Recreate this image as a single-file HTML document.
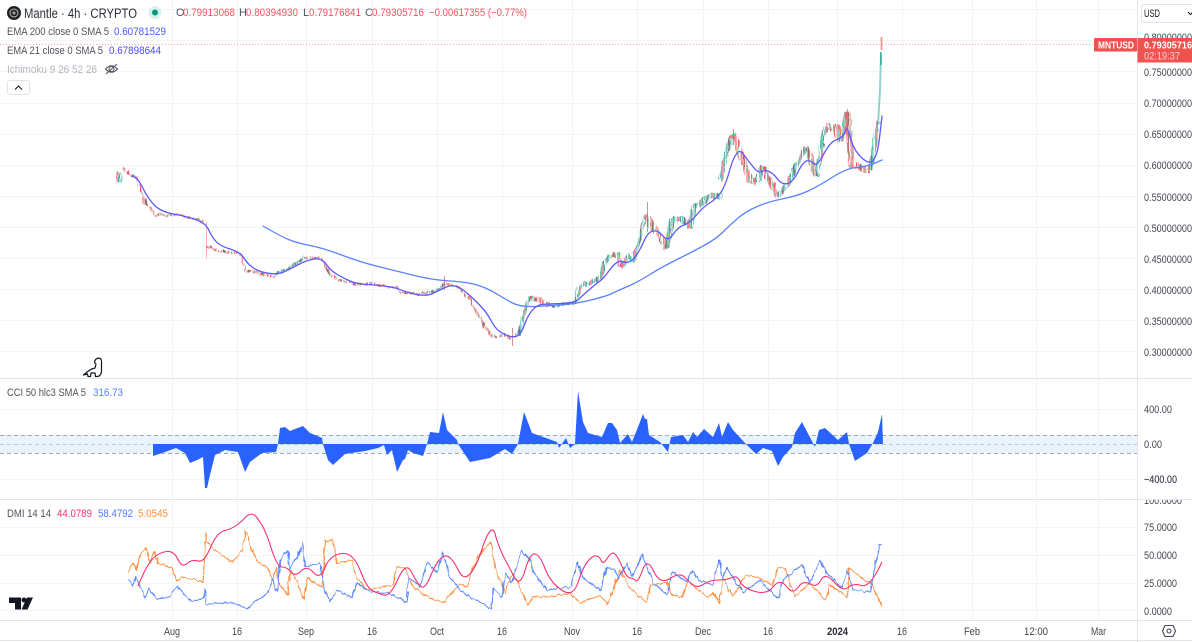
<!DOCTYPE html>
<html><head><meta charset="utf-8">
<style>
html,body{margin:0;padding:0;background:#fff;width:1192px;height:642px;overflow:hidden}
svg{display:block;font-family:"Liberation Sans",sans-serif;filter:blur(.3px)}
text{font-size:11px}
.g{fill:#50535e}.r{fill:#f7525f}.a{fill:#434651;font-size:11px}
.ln{fill:none;stroke-width:1.1;stroke-linejoin:round}
.ema{fill:none;stroke-width:1.3;stroke-linejoin:round;stroke-linecap:round}
.c{fill:none;stroke-linejoin:round;stroke-linecap:butt}
</style></head><body>
<svg width="1192" height="642" viewBox="0 0 1192 642" xmlns="http://www.w3.org/2000/svg">
<defs>
<pattern id="pg" patternUnits="userSpaceOnUse" width="11" height="40">
<rect x="0" width="1" height="40" fill="#26a69a" fill-opacity=".75"/><rect x="1" width="1" height="40" fill="#26a69a" fill-opacity=".5"/><rect x="2" width="1" height="40" fill="#6b5a5a"/><rect x="3" width="1" height="40" fill="#26a69a" fill-opacity=".85"/><rect x="4" width="1" height="40" fill="#26a69a" fill-opacity=".45"/><rect x="6" width="1" height="40" fill="#26a69a" fill-opacity=".8"/><rect x="7" width="1" height="40" fill="#ef5350" fill-opacity=".8"/><rect x="8" width="1" height="40" fill="#26a69a" fill-opacity=".6"/><rect x="9" width="1" height="40" fill="#3f8f88"/>
</pattern>
<pattern id="pr" patternUnits="userSpaceOnUse" width="13" height="40">
<rect x="0" width="1" height="40" fill="#ef5350" fill-opacity=".85"/><rect x="1" width="1" height="40" fill="#ef5350" fill-opacity=".55"/><rect x="2" width="1" height="40" fill="#6b5a5a"/><rect x="3" width="1" height="40" fill="#ef5350" fill-opacity=".9"/><rect x="5" width="1" height="40" fill="#ef5350" fill-opacity=".6"/><rect x="6" width="1" height="40" fill="#26a69a" fill-opacity=".6"/><rect x="7" width="1" height="40" fill="#ef5350" fill-opacity=".9"/><rect x="8" width="1" height="40" fill="#ef5350" fill-opacity=".5"/><rect x="10" width="1" height="40" fill="#e0444a"/><rect x="11" width="1" height="40" fill="#26a69a" fill-opacity=".5"/>
</pattern>
<filter id="j" filterUnits="userSpaceOnUse" x="0" y="0" width="1192" height="642" color-interpolation-filters="sRGB">
<feTurbulence type="fractalNoise" baseFrequency="0.22 0.08" numOctaves="2" seed="4" result="n"/>
<feDisplacementMap in="SourceGraphic" in2="n" scale="5" xChannelSelector="R" yChannelSelector="G"/>
</filter>
<filter id="k" filterUnits="userSpaceOnUse" x="0" y="0" width="1192" height="642" color-interpolation-filters="sRGB">
<feTurbulence type="fractalNoise" baseFrequency="0.3 0.1" numOctaves="2" seed="9" result="n"/>
<feDisplacementMap in="SourceGraphic" in2="n" scale="4" xChannelSelector="R" yChannelSelector="G"/>
</filter>
</defs>
<g stroke="#f3f4f6" stroke-width="1" fill="none" shape-rendering="crispEdges">
<path d="M172.500 0V620M237.500 0V620M306.500 0V620M372.500 0V620M437.500 0V620M502.500 0V620M572.500 0V620M637.500 0V620M703.500 0V620M768.500 0V620M837.500 0V620M902.500 0V620M972.500 0V620M1036.500 0V620M1098.500 0V620"/>
<path d="M0 9.500H1137M0 40.500H1137M0 71.500H1137M0 103.500H1137M0 134.500H1137M0 165.500H1137M0 196.500H1137M0 227.500H1137M0 258.500H1137M0 289.500H1137M0 320.500H1137M0 351.500H1137M0 409.500H1137M0 479.500H1137M0 527.500H1137M0 555.500H1137M0 583.500H1137M0 610.500H1137"/>
</g>
<rect x="0" y="435" width="1137" height="18" fill="#e8f4fd"/>
<g stroke="#a3a6af" stroke-width="1" stroke-dasharray="4 3" fill="none" shape-rendering="crispEdges">
<path d="M0 435.500H1137M0 453.500H1137"/><path d="M0 444.500H1137" stroke="#c5c7ce"/>
</g>
<g stroke="#e4e5ea" stroke-width="1" fill="none" shape-rendering="crispEdges">
<path d="M0 378.500H1137M0 499.500H1137M1137.500 0V642M0 620.500H1192M0 640.500H1192"/>
<path d="M1137 378.500H1192"/>
</g>
<path d="M0 44.500H1094" stroke="#f7a5a5" stroke-width="1" stroke-dasharray="1 2" fill="none" shape-rendering="crispEdges"/>

<!-- candles -->
<g filter="url(#j)" opacity=".85">
<polyline class="c" stroke="url(#pg)" stroke-width="5" points="119,172 120,182"/>
<polyline class="c" stroke="url(#pr)" stroke-width="2.500" points="122,168 131,176 138,178 141,190 146,205 150,208 155,214 165,215 180,215 205,222"/>
<polyline class="c" stroke="url(#pr)" stroke-width="2.500" points="206,246 215,250 240,254 245,270 275,277"/>
<polyline class="c" stroke="url(#pg)" stroke-width="3" points="275,275 278,272 290,268 300,260 304,256"/>
<polyline class="c" stroke="url(#pr)" stroke-width="2.500" points="304,258 322,258 330,275 340,280 355,284 372,284 397,288 400,292 425,294"/>
<polyline class="c" stroke="url(#pg)" stroke-width="2.500" points="425,294 440,289 444,283"/>
<polyline class="c" stroke="url(#pr)" stroke-width="2.500" points="444,283 460,288 470,300 490,335 492,337"/>
<polyline class="c" stroke="url(#pr)" stroke-width="3" points="492,337 505,335 511,340"/>
<polyline class="c" stroke="url(#pg)" stroke-width="3.500" points="515,336 520,332 525,310 530,297"/>
<polyline class="c" stroke="url(#pr)" stroke-width="5" points="530,299 540,300 550,306"/>
<polyline class="c" stroke="url(#pg)" stroke-width="3" points="550,306 575,303"/>
<polyline class="c" stroke="url(#pg)" stroke-width="4.500" points="575,303 579,287 600,278 604,264 612,254"/>
<polyline class="c" stroke="url(#pr)" stroke-width="5" points="612,254 618,255 621,268"/>
<polyline class="c" stroke="url(#pg)" stroke-width="4.500" points="621,268 628,255 633,260 640,240 645,215"/>
<polyline class="c" stroke="url(#pr)" stroke-width="7" points="645,215 653,228 660,236 667,248"/>
<polyline class="c" stroke="url(#pg)" stroke-width="6" points="667,248 672,220 683,219 690,226 694,208 710,196 722,196"/>
<polyline class="c" stroke="url(#pg)" stroke-width="5" points="720,180 728,146 733,134"/>
<polyline class="c" stroke="url(#pr)" stroke-width="7" points="733,134 738,147 750,180 757,182"/>
<polyline class="c" stroke="url(#pg)" stroke-width="5" points="757,182 763,166"/>
<polyline class="c" stroke="url(#pr)" stroke-width="6" points="763,166 767,177 778,196"/>
<polyline class="c" stroke="url(#pg)" stroke-width="5" points="778,196 788,184 797,165 805,147"/>
<polyline class="c" stroke="url(#pr)" stroke-width="6" points="805,147 810,158 817,177"/>
<polyline class="c" stroke="url(#pg)" stroke-width="5" points="817,177 822,140 826,127"/>
<polyline class="c" stroke="url(#pr)" stroke-width="8" points="826,127 837,128 841,142"/>
<polyline class="c" stroke="url(#pg)" stroke-width="4.500" points="841,142 847,112"/>
<polyline class="c" stroke="url(#pr)" stroke-width="7" points="847,112 850,147 852,165 870,170"/>
<polyline class="c" stroke="url(#pg)" stroke-width="5" points="870,170 873,153 878,120"/>
</g>
<path d="M206.500 222V258" stroke="#ef5350" stroke-opacity=".45" fill="none"/>
<path d="M444.500 276V290M512.500 328V346M647.500 202V232M733.500 129V145M847.500 109V130" stroke="#c0625f" stroke-opacity=".7" fill="none"/>
<path d="M878 125L880 90L881 55" stroke="#26a69a" stroke-opacity=".5" stroke-width="2" fill="none"/>
<path d="M880.800 65V52" stroke="#26a69a" stroke-opacity=".9" stroke-width="1.500" fill="none"/>
<path d="M881.500 37V50" stroke="#ef5350" stroke-opacity=".6" stroke-width="1.800" fill="none"/>

<path class="ema" stroke="#5b82ff" d="M263 226Q280 236 288.500 239.500Q297 243 310 245.500Q323 248 341.500 255Q360 262 380 267Q400 272 416.500 276Q433 280 450 281Q467 282 477 285Q487 288 496 293.500Q505 299 512.500 303Q520 307 535 306.500L560 305Q575 304 591 300Q607 296 612 293.500Q617 291 627.500 286.500Q638 282 649 275Q660 268 679 258.500Q698 249 707.500 243.500Q717 238 723.500 231.500Q730 225 737.500 218.500Q745 212 756 207Q767 202 782 199Q797 196 807 191.500Q817 187 832 177.500Q847 168 857 167.500Q867 167 882 160"/>
<path class="ema" stroke="#5a5aff" d="M132 176Q138 178 141.500 185.500Q145 193 150 200Q155 207 161 210Q167 213 173.500 214Q180 215 192.500 218.500Q205 222 208.500 229.500Q212 237 216 241.500Q220 246 230 249Q240 252 243.500 257.500Q247 263 252 267Q257 271 267 273Q277 275 283.500 272Q290 269 298.500 264.500Q307 260 314.500 259Q322 258 326 264Q330 270 336.500 274Q343 278 350 281Q357 284 367 284.500Q377 285 387 286.500Q397 288 398.500 289Q400 290 412.500 293.500Q425 297 432.500 293.500Q440 290 445 287.500Q450 285 455 286Q460 287 467.500 293.500Q475 300 481 306.500Q487 313 491 320.500Q495 328 499 331Q503 334 509 336Q515 338 518.500 335Q522 332 525 323.500Q528 315 532.500 310Q537 305 542 304.500Q547 304 561 303.500Q575 303 579 299Q583 295 590 289Q597 283 600 281Q603 279 610 269.500Q617 260 622 261.500Q627 263 630 261.500Q633 260 636.500 255Q640 250 644 241Q648 232 653 231Q658 230 663 236Q668 242 673 234.500Q678 227 684 225Q690 223 696.500 215Q703 207 709 203.500Q715 200 720 193.500Q725 187 729 172.500Q733 158 736.500 154Q740 148 745 156.500Q750 163 754 168Q758 173 761.500 171.500Q765 170 769 171.500Q773 173 777.500 179Q782 185 787.500 183.500Q793 182 798 172Q803 162 806.500 161Q810 160 813.500 163.500Q817 167 823.500 154.500Q830 142 836 140Q842 138 844.500 133.500Q847 122 851 140.500Q855 152 862.500 158.500Q870 165 873.500 160Q877 155 878.500 145Q880 135 882 116"/>

<path fill="#2962ff" d="M153 444L153 456 165 452 176 448 185 453 190 463 197 460 203 457 205 488 207 488 210 475 215 455 225 450 238 452 245 472 250 462 262 453 276 452 278 444 280 428 285 427 290 431 295 429 303 426 310 433 322 438 323 444 328 460 333 465 345 454 365 451 378 448 384 445 387 455 392 450 397 472 403 460 405 459 408 450 413 453 423 456 427 444 430 432 439 433 443 412 447 430 457 440 458 444 470 462 490 458 505 449 512 454 518 444 524 412 532 433 557 442 559 448 566 438 570 448 575 444 578 391 583 422 588 433 602 437 608 423 612 423 617 430 620 443 628 434 632 442 638 427 643 414 645 419 647 419 649 435 660 442 668 452 671 437 683 435 688 442 693 432 697 437 704 429 713 437 719 423 722 437 728 422 733 430 745 443 756 454 763 448 772 451 778 466 783 457 792 447 795 433 802 422 815 447 819 430 825 428 838 440 847 432 849 444 855 461 867 453 873 443 878 432 882 414 883 444Z"/>
<g filter="url(#k)">
<polyline class="ln" stroke="#ff8f3c" points="128,573 133,563 136,570 140,555 146,548 150,563 154,552 158,563 172,568 177,582 182,577 197,580 203,582 206,532 207,542 217,552 232,562 243,550 245,530 253,552 258,563 268,568 273,580 277,567 278,582 288,595 290,570 295,578 304,599 308,578 322,588 325,540 328,543 332,538 337,563 352,560 357,578 367,590 393,585 397,567 405,568 413,587 430,598 443,603 450,595 460,583 467,587 473,567 483,550 491,542 495,567 505,593 513,573 528,605 533,597 550,597 570,593 580,603 600,595 608,605 620,570 630,588 647,603 650,585 667,582 672,595 682,598 688,582 707,597 713,592 719,603 723,578 733,597 745,575 757,577 772,585 778,567 785,568 795,597 810,583 825,600 830,585 847,597 849,568 858,575 867,582 872,583 882,606"/>
<polyline class="ln" stroke="#5b86ff" points="128,579 133,587 136,577 145,597 148,588 157,599 170,597 177,586 192,602 203,598 205,589 206,604 230,602 248,609 257,600 268,593 272,578 277,592 280,560 288,550 290,570 297,557 303,543 305,567 320,563 325,590 330,602 337,590 352,597 357,583 370,592 390,593 407,602 408,577 420,587 427,563 437,572 443,552 450,577 460,590 470,597 492,609 493,588 502,597 505,572 512,583 521,550 530,560 533,572 547,590 570,587 578,562 582,577 600,590 607,567 615,570 618,580 627,562 632,577 642,555 653,582 667,595 672,572 687,582 692,570 698,580 713,585 719,560 722,580 727,568 733,578 743,592 760,580 778,599 783,580 795,570 802,565 810,583 820,560 827,573 842,588 847,570 853,590 870,592 876,562 880,545 882,545"/>
</g>
<path class="ln" stroke="#f5326e" d="M138 586Q147 564 153.500 558Q160 552 167 551.500Q174 551 178 559.500Q182 568 187 563.500Q192 559 198 561Q204 563 210.500 547.500Q217 532 225 530.500Q233 529 242.500 520.500Q252 508 258.500 520Q265 528 271 547.500Q277 567 282 567Q287 567 291 572Q295 577 301 571Q307 565 313.500 572.500Q320 580 325 567.500Q330 555 341.500 553.500Q353 552 360 570Q367 588 372 590.500Q377 593 383.500 595Q390 597 398 579Q406 561 411.500 572Q417 583 421 586.500Q425 590 431 575Q437 560 443.500 556.500Q450 553 458.500 570.500Q467 588 479.500 556.500Q492 516 496 537.500Q500 550 504 557.500Q508 565 514 576.500Q520 588 525 570.500Q530 553 535 554Q540 555 545 568.500Q550 582 561.500 590Q573 598 578 582.500Q583 567 588 561Q593 555 596.500 556Q600 557 601.500 561Q603 565 607.500 558Q612 551 615 554Q618 557 622.500 567.500Q627 578 630 578Q633 578 635.500 580.500Q638 583 642.500 570Q647 557 653.500 571Q660 585 670 578.500Q680 572 685 577.500Q690 583 694 585.500Q698 588 704 584Q710 580 718.500 580Q727 580 732 577.500Q737 575 740 581.500Q743 588 755 591.500Q767 595 773.500 586.500Q780 578 786.500 586.500Q793 595 798 587.500Q803 580 810 584Q817 588 821 580Q825 572 834 582Q843 592 848 587.500Q853 583 861.500 585.500Q870 588 882 562"/>

<!-- legend -->
<circle cx="14" cy="13" r="7" fill="#222"/><circle cx="14" cy="13" r="4" fill="none" stroke="#bbb" stroke-width="1"/><circle cx="14" cy="13" r="1.600" fill="#999"/>
<text x="24" y="18" style="font-size:13.5px" fill="#2a2e39" textLength="113" lengthAdjust="spacingAndGlyphs">Mantle · 4h · CRYPTO</text>
<circle cx="155" cy="12.500" r="6.500" fill="#d8f1ec"/><circle cx="155" cy="12.500" r="3" fill="#089981"/>
<text x="176" y="16" class="g">O</text><text x="183" y="16" class="r" textLength="52" lengthAdjust="spacingAndGlyphs">0.79913068</text>
<text x="239" y="16" class="g">H</text><text x="246" y="16" class="r" textLength="52" lengthAdjust="spacingAndGlyphs">0.80394930</text>
<text x="303" y="16" class="g">L</text><text x="309" y="16" class="r" textLength="52" lengthAdjust="spacingAndGlyphs">0.79176841</text>
<text x="365" y="16" class="g">C</text><text x="372" y="16" class="r" textLength="52" lengthAdjust="spacingAndGlyphs">0.79305716</text>
<text x="429" y="16" class="r" textLength="98" lengthAdjust="spacingAndGlyphs">−0.00617355 (−0.77%)</text>
<text x="7" y="35" class="g" textLength="102" lengthAdjust="spacingAndGlyphs">EMA 200 close 0 SMA 5</text><text x="114" y="35" fill="#4a5cff" textLength="52" lengthAdjust="spacingAndGlyphs">0.60781529</text>
<text x="7" y="54" class="g" textLength="96" lengthAdjust="spacingAndGlyphs">EMA 21 close 0 SMA 5</text><text x="109" y="54" fill="#4a4aff" textLength="52" lengthAdjust="spacingAndGlyphs">0.67898644</text>
<text x="7" y="73" fill="#b2b5be" textLength="90" lengthAdjust="spacingAndGlyphs">Ichimoku 9 26 52 26</text>
<g fill="none" stroke="#50535e" stroke-width="1"><path d="M105.500 69Q111.500 62.500 117.500 69Q111.500 75.500 105.500 69Z"/><circle cx="111.500" cy="69" r="2.500"/><path d="M106 74L117 64"/></g>
<rect x="7.500" y="80.500" width="22" height="14" rx="2.500" fill="#fff" stroke="#e0e3eb"/>
<path d="M15 89.500L18.500 86L22 89.500" fill="none" stroke="#131722" stroke-width="1.100"/>
<text x="7" y="396" class="g" textLength="79" lengthAdjust="spacingAndGlyphs">CCI 50 hlc3 SMA 5</text><text x="93" y="396" fill="#2962ff" fill-opacity=".8" textLength="30" lengthAdjust="spacingAndGlyphs">316.73</text>
<text x="7" y="517" class="g" textLength="44" lengthAdjust="spacingAndGlyphs">DMI 14 14</text><text x="57" y="517" fill="#f5326e" textLength="35" lengthAdjust="spacingAndGlyphs">44.0789</text><text x="98" y="517" fill="#4a7aff" textLength="35" lengthAdjust="spacingAndGlyphs">58.4792</text><text x="138" y="517" fill="#ff8f3c" textLength="30" lengthAdjust="spacingAndGlyphs">5.0545</text>

<!-- dino -->
<path d="M83.500 375L89 370.500Q92 368.500 95 368L96 364L94.500 362.500Q95 358.500 98.500 358Q101.500 358 101.500 361.500L101.500 371Q101 376.500 97 376.500L95.500 376.500L95 373L91 373L90.500 376.500L88 376.500L87.500 374Z" fill="#fff" stroke="#131722" stroke-width="1.200" stroke-linejoin="round"/>
<!-- TV logo -->
<path d="M9 597.500H21V609.500H15V603H9Z" fill="#131722"/><circle cx="24" cy="600" r="2.500" fill="#131722"/><path d="M27 597.500H33L27.500 609.500H21.500Z" fill="#131722"/>

<!-- right axis -->
<rect x="1141.500" y="4.500" width="60" height="18" rx="3" fill="#fff" stroke="#e0e3eb"/>
<text x="1144" y="17" fill="#131722" textLength="16" lengthAdjust="spacingAndGlyphs">USD</text>
<path d="M1188 12l2.500 2.500 2.500-2.500" fill="none" stroke="#131722"/>
<text class="a" x="1144" y="41" textLength="48" lengthAdjust="spacingAndGlyphs">0.80000000</text>
<text class="a" x="1144" y="76" textLength="48" lengthAdjust="spacingAndGlyphs">0.75000000</text>
<text class="a" x="1144" y="107" textLength="48" lengthAdjust="spacingAndGlyphs">0.70000000</text>
<text class="a" x="1144" y="138" textLength="48" lengthAdjust="spacingAndGlyphs">0.65000000</text>
<text class="a" x="1144" y="169" textLength="48" lengthAdjust="spacingAndGlyphs">0.60000000</text>
<text class="a" x="1144" y="201" textLength="48" lengthAdjust="spacingAndGlyphs">0.55000000</text>
<text class="a" x="1144" y="232" textLength="48" lengthAdjust="spacingAndGlyphs">0.50000000</text>
<text class="a" x="1144" y="263" textLength="48" lengthAdjust="spacingAndGlyphs">0.45000000</text>
<text class="a" x="1144" y="294" textLength="48" lengthAdjust="spacingAndGlyphs">0.40000000</text>
<text class="a" x="1144" y="325" textLength="48" lengthAdjust="spacingAndGlyphs">0.35000000</text>
<text class="a" x="1144" y="356" textLength="48" lengthAdjust="spacingAndGlyphs">0.30000000</text>
<text class="a" x="1144" y="413" textLength="28" lengthAdjust="spacingAndGlyphs">400.00</text>
<text class="a" x="1144" y="448" textLength="18" lengthAdjust="spacingAndGlyphs">0.00</text>
<text class="a" x="1144" y="483" textLength="33" lengthAdjust="spacingAndGlyphs">−400.00</text>
<text class="a" x="1144" y="504" textLength="38" lengthAdjust="spacingAndGlyphs">100.0000</text>
<rect x="1138" y="486" width="54" height="13.500" fill="#fff"/>
<text class="a" x="1144" y="483" textLength="33" lengthAdjust="spacingAndGlyphs">−400.00</text>
<rect x="1137" y="499" width="55" height="1" fill="#e4e5ea"/>
<text class="a" x="1144" y="531" textLength="33" lengthAdjust="spacingAndGlyphs">75.0000</text>
<text class="a" x="1144" y="559" textLength="33" lengthAdjust="spacingAndGlyphs">50.0000</text>
<text class="a" x="1144" y="587" textLength="33" lengthAdjust="spacingAndGlyphs">25.0000</text>
<text class="a" x="1144" y="615" textLength="28" lengthAdjust="spacingAndGlyphs">0.0000</text>
<rect x="1094" y="38" width="43" height="13.500" rx="1" fill="#ef5350"/>
<text x="1098" y="48.500" fill="#fff" style="font-weight:bold;font-size:10.500px" textLength="36" lengthAdjust="spacingAndGlyphs">MNTUSD</text>
<rect x="1137.500" y="38" width="54.500" height="24.500" fill="#ef5350"/>
<text x="1144" y="48.500" fill="#fff" style="font-weight:bold;font-size:10.500px" textLength="48" lengthAdjust="spacingAndGlyphs">0.79305716</text>
<text x="1144" y="59.500" fill="#ffd0d0" textLength="36" lengthAdjust="spacingAndGlyphs">02:19:37</text>

<!-- time axis -->
<text class="a" x="164" y="635" textLength="16" lengthAdjust="spacingAndGlyphs">Aug</text><text class="a" x="232" y="635" textLength="10" lengthAdjust="spacingAndGlyphs">16</text><text class="a" x="298" y="635" textLength="16" lengthAdjust="spacingAndGlyphs">Sep</text><text class="a" x="367" y="635" textLength="10" lengthAdjust="spacingAndGlyphs">16</text><text class="a" x="430" y="635" textLength="14" lengthAdjust="spacingAndGlyphs">Oct</text><text class="a" x="497" y="635" textLength="10" lengthAdjust="spacingAndGlyphs">16</text><text class="a" x="564" y="635" textLength="16" lengthAdjust="spacingAndGlyphs">Nov</text><text class="a" x="632" y="635" textLength="10" lengthAdjust="spacingAndGlyphs">16</text><text class="a" x="695" y="635" textLength="16" lengthAdjust="spacingAndGlyphs">Dec</text><text class="a" x="763" y="635" textLength="10" lengthAdjust="spacingAndGlyphs">16</text>
<text x="827" y="635" fill="#2a2e39" style="font-weight:bold" textLength="21" lengthAdjust="spacingAndGlyphs">2024</text>
<text class="a" x="897" y="635" textLength="10" lengthAdjust="spacingAndGlyphs">16</text><text class="a" x="964" y="635" textLength="16" lengthAdjust="spacingAndGlyphs">Feb</text><text class="a" x="1024" y="635" textLength="24" lengthAdjust="spacingAndGlyphs">12:00</text><text class="a" x="1091" y="635" textLength="15" lengthAdjust="spacingAndGlyphs">Mar</text>
<path d="M1165 625.500L1173 625.500L1175.500 631L1173 636.500L1165 636.500L1162.500 631Z" fill="none" stroke="#434651" stroke-width="1.100" stroke-linejoin="round"/><circle cx="1169" cy="631" r="2" fill="none" stroke="#434651" stroke-width="1.100"/>
</svg>
</body></html>
